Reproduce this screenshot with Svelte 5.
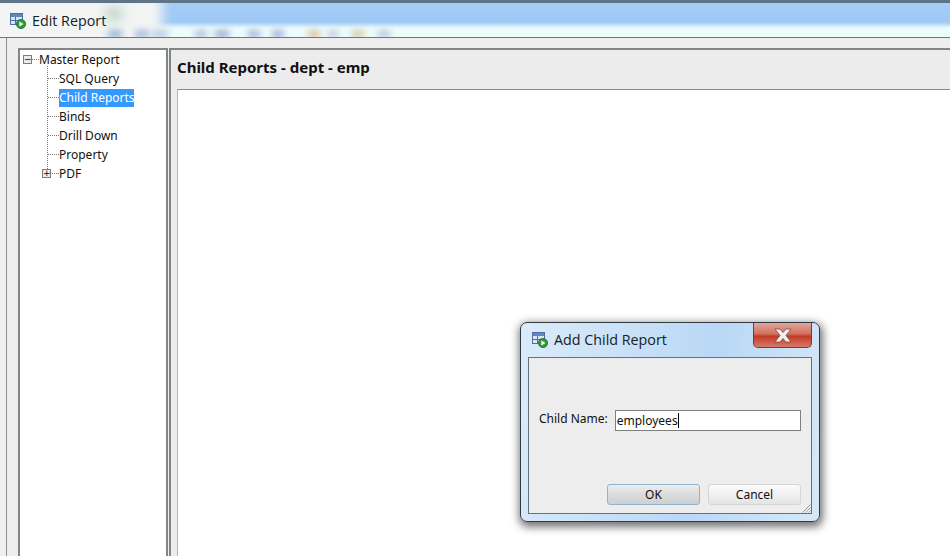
<script lang="ts">
  const nodes = [
    { label: 'SQL Query' },
    { label: 'Child Reports', selected: true },
    { label: 'Binds' },
    { label: 'Drill Down' },
    { label: 'Property' },
    { label: 'PDF', collapsed: true }
  ];
  // blurred toolbar of the window behind the title bar
  const blobs = [
    { x: 108, w: 14, c: '#9db8d8' },
    { x: 135, w: 14, c: '#a9bfe0' },
    { x: 152, w: 16, c: '#c0cfe4' },
    { x: 195, w: 12, c: '#b4c6dc' },
    { x: 215, w: 14, c: '#9fb5d8' },
    { x: 248, w: 12, c: '#a5bcdf' },
    { x: 272, w: 12, c: '#a9b4df' },
    { x: 308, w: 12, c: '#dcc3a8' },
    { x: 328, w: 10, c: '#c4d2df' },
    { x: 352, w: 12, c: '#dcc9b0' },
    { x: 378, w: 12, c: '#b9cde6' }
  ];
</script>

{#snippet reportIcon()}
  <svg class="icon" width="16" height="16" viewBox="0 0 16 16">
    <rect x="0.5" y="0.5" width="12" height="11" fill="#dbe6f4" stroke="#4a70a8" />
    <rect x="1" y="1" width="11" height="3" fill="#5f86bd" />
    <path d="M1 7.5h11M5.5 4v7.5" stroke="#4a70a8" fill="none" />
    <circle cx="11" cy="11" r="4.6" fill="#2f9a3a" stroke="#1d6b28" stroke-width="0.8" />
    <path d="M9.4 8.6l4 2.4-4 2.4z" fill="#fff" />
  </svg>
{/snippet}

<div class="screen">
  <header class="titlebar">
    <div class="smear s1"></div>
    <div class="smear s2"></div>
    {#each blobs as b}
      <div class="smear blob" style="left: {b.x}px; width: {b.w}px; background: {b.c}"></div>
    {/each}
    {@render reportIcon()}
    <span class="title">Edit Report</span>
  </header>

  <main class="frame">
    <aside class="tree">
      <div class="root">
        <span class="box">−</span><span class="dots short"></span><span class="label">Master Report</span>
      </div>
      <ul>
        {#each nodes as node}
          <li>
            {#if node.collapsed}<span class="box plus">+</span>{/if}
            <span class="dots"></span>
            <span class="label" class:selected={node.selected}>{node.label}</span>
          </li>
        {/each}
      </ul>
    </aside>

    <section class="panel">
      <h1>Child Reports - dept - emp</h1>
      <div class="content"></div>
    </section>
  </main>

  <div class="dialog">
    <div class="dialog-title">
      {@render reportIcon()}
      <span class="title">Add Child Report</span>
      <button class="close" aria-label="Close">
        <svg width="20" height="15" viewBox="0 0 20 15">
          <path d="M2 1h5l3 3.6L13 1h5l-5 6.5 5 6.5h-5l-3-3.6L7 14H2l5-6.5z" fill="#f1f1f1" stroke="#7a4a46" stroke-width="0.8" />
        </svg>
      </button>
    </div>
    <div class="dialog-body">
      <div class="field">
        <label for="child">Child Name:</label>
        <div class="input" id="child">employees<span class="caret"></span></div>
      </div>
      <div class="actions">
        <button class="btn default">OK</button>
        <button class="btn">Cancel</button>
      </div>
      <svg class="grip" width="10" height="10" viewBox="0 0 10 10">
        <path d="M9.5 1.5l-8 8M9.5 4.5l-5 5M9.5 7.5l-2 2" stroke="#9aa0a6" fill="none" />
      </svg>
    </div>
  </div>
</div>

<style>
  :global(body) { margin: 0; background: #fff; }
  .screen {
    position: relative;
    width: 950px;
    height: 556px;
    overflow: hidden;
    display: flex;
    flex-direction: column;
    font-family: "Noto Sans", sans-serif;
    color: #111;
    background: #f0f0f0;
  }
  .titlebar {
    position: relative;
    overflow: hidden;
    box-sizing: border-box;
    height: 38px;
    flex: none;
    display: flex;
    align-items: center;
    gap: 6px;
    padding: 1px 0 0 10px;
    border-top: 3px solid #5f7488;
    border-bottom: 1px solid #6e7676;
    background: linear-gradient(#a5cdf6 0, #9fc9f6 19px, #e9fbfb 25px, #effdfb 100%);
  }
  .titlebar .icon, .titlebar .title { position: relative; }
  .smear { position: absolute; filter: blur(6px); }
  .s1 { left: -10px; top: -8px; width: 172px; height: 52px; background: #f2f5f3; }
  .s2 { left: 106px; top: 5px; width: 16px; height: 12px; background: #b9cfc2; }
  .blob { top: 27px; height: 8px; filter: blur(3px); }
  .title { font-family: "Open Sans", sans-serif; font-size: 14.3px; color: #15202a; }

  .frame {
    flex: 1;
    min-height: 0;
    margin-left: 6px;
    box-sizing: border-box;
    display: flex;
    gap: 1px;
    padding: 10px 0 0 11px;
    border-left: 1px solid #8b8f8f;
    background: #eeeeee;
  }
  .tree {
    box-sizing: border-box;
    width: 150px;
    flex: none;
    padding: 0 0 0 3px;
    background: #fff;
    border: 2px solid #808684;
    border-bottom: 0;
    font-size: 12px;
  }
  .root, li { display: flex; align-items: center; height: 19px; }
  ul { list-style: none; margin: 0; padding: 0 0 0 22px; position: relative; }
  ul::before {
    content: "";
    position: absolute;
    left: 24px;
    top: -3px;
    height: 103px;
    border-left: 1px dotted #777;
  }
  li { position: relative; }
  .dots { flex: none; width: 11px; margin-left: 3px; border-top: 1px dotted #777; }
  .short { width: 7px; margin-left: 0; }
  .label { padding: 0; line-height: 18px; white-space: nowrap; }
  .selected { background: #3399ff; color: #fff; height: 18px; width: 75px; overflow: hidden; }
  .box {
    box-sizing: border-box;
    flex: none;
    width: 9px;
    height: 9px;
    border: 1px solid #7c7c7c;
    background: #eaeaea;
    font: 9px/6px "DejaVu Sans", sans-serif;
    text-align: center;
  }
  .plus {
    position: absolute;
    left: -3px;
    z-index: 1;
  }

  .panel {
    flex: 1;
    min-width: 0;
    display: flex;
    flex-direction: column;
    border-top: 2px solid #808684;
    border-left: 2px solid #808684;
    background: #ececec;
  }
  h1 {
    box-sizing: border-box;
    height: 39px;
    flex: none;
    margin: 0;
    padding: 7px 0 0 6px;
    font-size: 15px;
    line-height: 20px;
    font-weight: 700;
    color: #111;
  }
  .content {
    flex: 1;
    margin-left: 6px;
    border-top: 1px solid #8a8a8a;
    border-left: 1px solid #b5b5b5;
    background: #fff;
  }

  .dialog {
    position: absolute;
    left: 520px;
    top: 322px;
    box-sizing: border-box;
    width: 300px;
    height: 200px;
    padding: 0 7px 7px;
    display: flex;
    flex-direction: column;
    border: 1px solid #2f3a42;
    border-radius: 7px;
    background: linear-gradient(100deg, #dcebf9, #b9d8f5 60%, #d7e8f8);
    box-shadow: 1px 3px 8px 2px rgba(0, 0, 0, 0.55);
  }
  .dialog-title {
    position: relative;
    height: 34px;
    flex: none;
    display: flex;
    align-items: center;
    gap: 6px;
    padding: 0 0 1px 4px;
    box-sizing: border-box;
  }
  .close {
    position: absolute;
    right: 0;
    top: 0;
    width: 59px;
    height: 25px;
    padding: 0;
    display: flex;
    align-items: center;
    justify-content: center;
    border: 1px solid #7d3a34;
    border-top: 0;
    border-radius: 0 0 5px 5px;
    background: linear-gradient(#e0a79e, #d4705f 45%, #c23a24 55%, #d8796a);
  }
  .dialog-body {
    position: relative;
    flex: 1;
    display: flex;
    flex-direction: column;
    box-sizing: border-box;
    padding: 52px 10px 8px 10px;
    border: 1px solid #64727e;
    background: #ededed;
    font-size: 12px;
  }
  .field { display: flex; align-items: center; gap: 7px; }
  label { position: relative; top: -2px; }
  .input {
    box-sizing: border-box;
    flex: 1;
    height: 21px;
    padding-left: 1px;
    line-height: 20px;
    border: 1px solid #7f7f7f;
    background: #fff;
    white-space: nowrap;
  }
  .caret { display: inline-block; width: 1px; height: 15px; vertical-align: -3px; background: #000; }
  .actions { margin-top: auto; display: flex; justify-content: flex-end; gap: 8px; }
  .btn {
    box-sizing: border-box;
    width: 93px;
    height: 21px;
    padding: 0;
    font: 12px "Noto Sans", sans-serif;
    color: #111;
    border: 1px solid #d6d6d6;
    border-radius: 3px;
    background: linear-gradient(#fbfbfb, #f1f1f1 50%, #e3e3e3);
  }
  .default {
    border-color: #8fb4d2;
    background: linear-gradient(#ededed, #dcdcdc 50%, #cfcfcf);
  }
  .grip { position: absolute; right: 0; bottom: 0; }
</style>
